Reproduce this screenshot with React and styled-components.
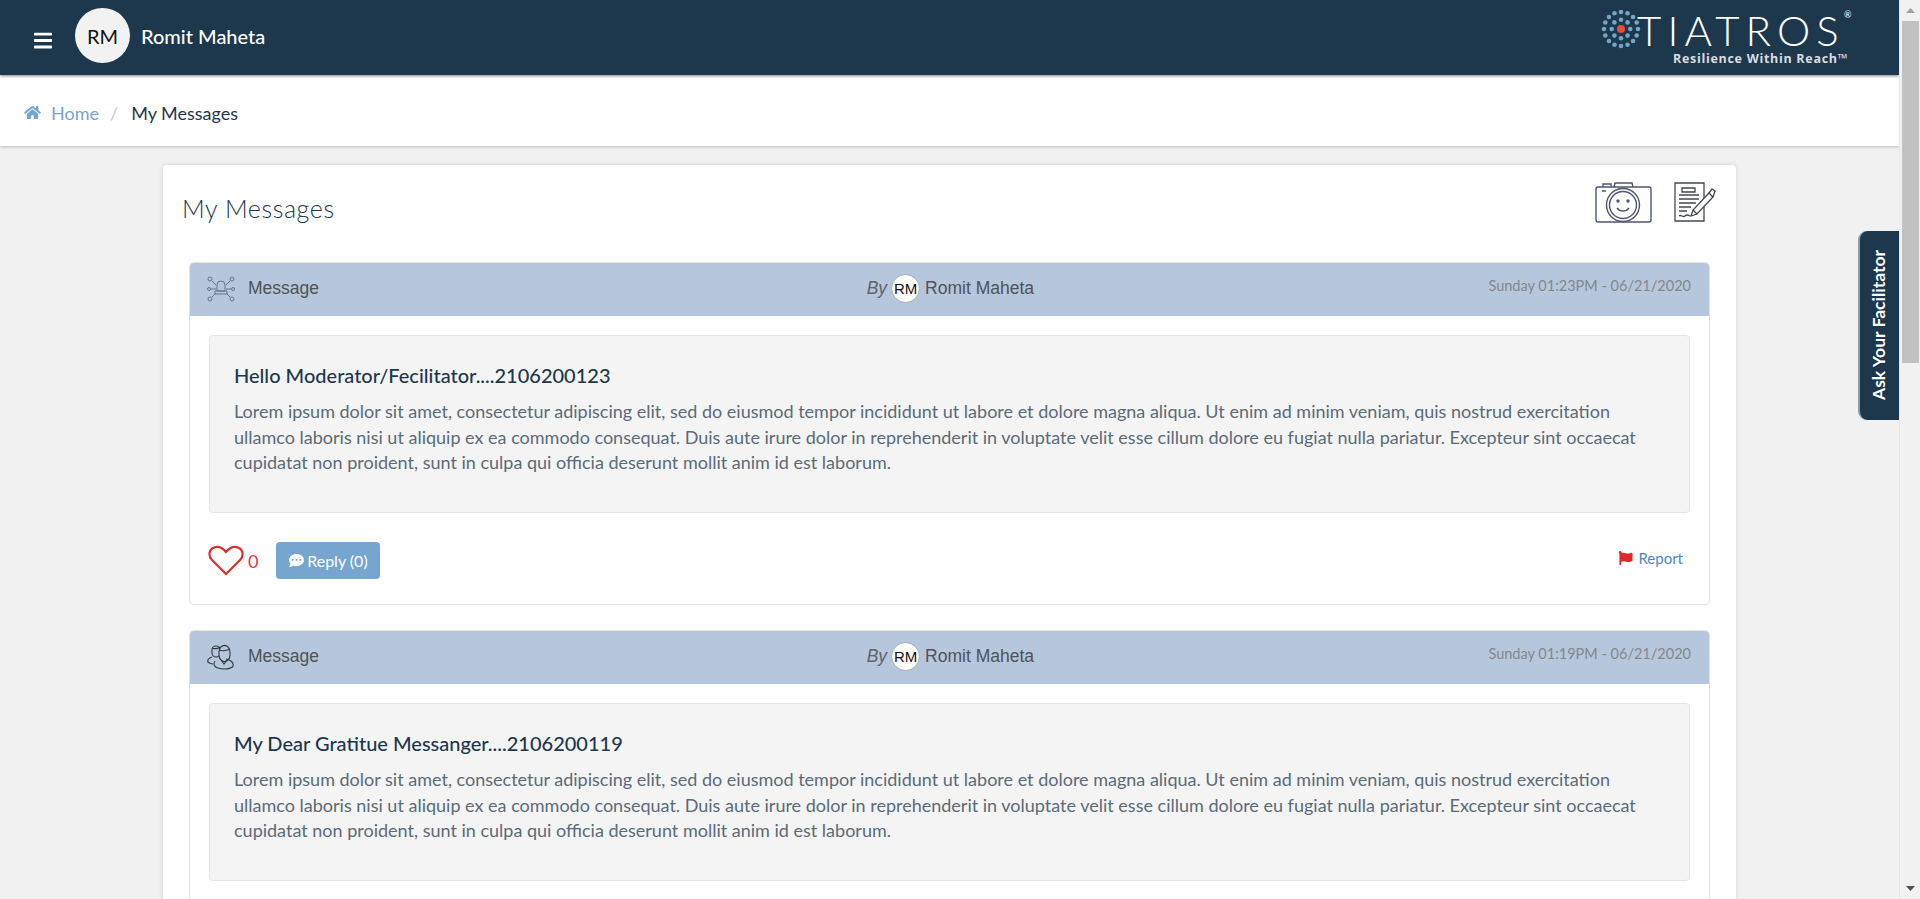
import React from "react";
import styled, { createGlobalStyle } from "styled-components";
import { FaBars, FaHome, FaCommentDots, FaFlag } from "react-icons/fa";

const GlobalStyle = createGlobalStyle`
  html, body {
    margin: 0;
    padding: 0;
    height: 899px;
    overflow: hidden;
    background: #f1f1f1;
    font-family: "Lato", "Open Sans", sans-serif;
  }
  * { box-sizing: border-box; }
`;

const lorem =
  "Lorem ipsum dolor sit amet, consectetur adipiscing elit, sed do eiusmod tempor incididunt ut labore et dolore magna aliqua. Ut enim ad minim veniam, quis nostrud exercitation ullamco laboris nisi ut aliquip ex ea commodo consequat. Duis aute irure dolor in reprehenderit in voluptate velit esse cillum dolore eu fugiat nulla pariatur. Excepteur sint occaecat cupidatat non proident, sunt in culpa qui officia deserunt mollit anim id est laborum.";

const messages = [
  { id: 1, icon: "network", date: "Sunday 01:23PM - 06/21/2020", title: "Hello Moderator/Fecilitator....2106200123" },
  { id: 2, icon: "people", date: "Sunday 01:19PM - 06/21/2020", title: "My Dear Gratitue Messanger....2106200119" },
];

const Page = styled.div`
  display: flex;
  width: 1920px;
  height: 899px;
  position: relative;
`;

const Main = styled.div`
  width: 1899px;
  height: 899px;
  overflow: hidden;
  background: #f1f1f1;
  position: relative;
`;

const Header = styled.header`
  height: 75px;
  background: #1d374c;
  box-shadow: 0 1px 3px rgba(0, 0, 0, 0.5);
  display: flex;
  align-items: center;
  padding: 0 49px 4px 34px;
  position: relative;
  z-index: 2;
`;

const Burger = styled(FaBars)`
  color: #fff;
  width: 18px;
  height: 21px;
  margin-right: 23px;
  margin-top: 9px;
`;

const Avatar = styled.div`
  width: 55px;
  height: 55px;
  border-radius: 50%;
  background: #f2f2f2;
  color: #111;
  display: flex;
  align-items: center;
  justify-content: center;
  font-size: 20px;
  margin-right: 11px;
`;

const UserName = styled.div`
  color: #fff;
  font-size: 20px;
  font-weight: 500;
`;

const Logo = styled.div`
  margin-left: auto;
  position: relative;
  width: 250px;
  height: 75px;
  margin-bottom: -4px;
`;

const LogoMark = styled.svg`
  position: absolute;
  left: 1px;
  top: 9px;
`;

const LogoWord = styled.div`
  position: absolute;
  left: 37px;
  top: 10px;
  color: #fff;
  font-size: 42px;
  line-height: 40px;
  font-weight: 300;
  letter-spacing: 6.1px;
  white-space: nowrap;
`;

const LogoReg = styled.span`
  position: absolute;
  left: 244px;
  top: 10px;
  color: #fff;
  font-size: 9px;
  line-height: 10px;
`;

const LogoTag = styled.div`
  position: absolute;
  left: 73px;
  top: 51px;
  color: #d9dde0;
  font-family: "Open Sans", sans-serif;
  font-size: 12.5px;
  line-height: 16px;
  font-weight: 700;
  letter-spacing: 0.7px;
  white-space: nowrap;
`;

const Crumbs = styled.nav`
  height: 71px;
  background: #fff;
  box-shadow: 0 1px 3px rgba(0, 0, 0, 0.22);
  display: flex;
  align-items: center;
  padding: 4px 24px 0;
  font-size: 18px;
  position: relative;
  z-index: 1;
`;

const HomeIcon = styled(FaHome)`
  color: #74a5d1;
  width: 17px;
  height: 15px;
  margin-right: 10px;
`;

const HomeLink = styled.a`
  color: #74a5d1;
`;

const CrumbSep = styled.span`
  color: #c8c8c8;
  margin: 0 13px 0 11px;
`;

const CrumbCurrent = styled.span`
  color: #1d374c;
`;

const Content = styled.div`
  padding: 19px 163px 0;
`;

const Panel = styled.section`
  background: #fff;
  border-radius: 4px;
  box-shadow: 0 0 5px rgba(0, 0, 0, 0.12);
  padding: 0 26px 20px;
`;

const PanelHead = styled.div`
  height: 97px;
  margin: 0 -6px 0 -7px;
  display: flex;
  align-items: flex-start;
  justify-content: space-between;
`;

const PanelTitle = styled.h2`
  margin: 26px 0 0;
  color: #1d374c;
  font-size: 25px;
  line-height: 34px;
  font-weight: 300;
  letter-spacing: 0.6px;
`;

const PanelTools = styled.div`
  display: flex;
  gap: 22px;
  padding-top: 17px;
`;

const MessageCard = styled.article`
  border: 1px solid #e2e2e2;
  border-radius: 5px;
  margin-bottom: 25px;
  overflow: hidden;
  background: #fff;
`;

const MessageHead = styled.div`
  height: 53px;
  background: #b6c6dc;
  display: grid;
  grid-template-columns: 1fr 1fr 1fr;
  align-items: center;
  padding: 0 18px 2px 17px;
  font-family: "Liberation Sans", Arial, sans-serif;
  color: #4f5358;
  font-size: 17.5px;
`;

const HeadLeft = styled.div`
  display: flex;
  align-items: center;
  gap: 13px;
`;

const HeadCenter = styled.div`
  display: flex;
  align-items: center;
  margin-left: 165px;
  white-space: nowrap;
`;

const ByLabel = styled.em`
  color: #5f6468;
  margin-right: 4px;
`;

const SmallAvatar = styled.span`
  width: 29px;
  height: 29px;
  border-radius: 50%;
  background: #fff;
  border: 1px solid #a9a9a9;
  color: #111;
  font-size: 15px;
  display: flex;
  align-items: center;
  justify-content: center;
  margin-right: 5px;
`;

const DateText = styled.div`
  text-align: right;
  font-family: "Lato", sans-serif;
  font-size: 14.5px;
  color: #83888d;
  margin-bottom: 6px;
`;

const MessageBody = styled.div`
  padding: 19px 19px 0 19px;
`;

const Well = styled.div`
  height: 178px;
  background: #f4f4f4;
  border: 1px solid #e3e3e3;
  border-radius: 4px;
  padding: 24px 24px;
`;

const WellTitle = styled.h4`
  margin: 0 0 9px;
  color: #1d374c;
  font-size: 20px;
  line-height: 30px;
  font-weight: 500;
`;

const WellText = styled.p`
  margin: 0;
  color: #5b6b78;
  font-size: 18px;
  line-height: 25.5px;
`;

const MessageFoot = styled.div`
  height: 91px;
  padding: 4px 26px 0 18px;
  display: flex;
  align-items: center;
`;

const LikeCount = styled.span`
  color: #e0393e;
  font-size: 18px;
  margin: 0 18px 0 4px;
`;

const ReplyButton = styled.button`
  width: 104px;
  height: 37px;
  background: #76a5cf;
  border: none;
  border-radius: 4px;
  color: #fff;
  font-family: inherit;
  font-size: 16px;
  display: flex;
  align-items: center;
  justify-content: center;
  gap: 3px;
`;

const ReportLink = styled.a`
  margin-left: auto;
  margin-bottom: 5px;
  color: #4a88c0;
  font-size: 15px;
  display: flex;
  align-items: center;
  gap: 5px;
`;

const ReportFlag = styled(FaFlag)`
  color: #e0282e;
  width: 15px;
  height: 14px;
`;

const FacilitatorTab = styled.button`
  position: absolute;
  right: 0;
  top: 231px;
  width: 41px;
  height: 189px;
  background: #1d374c;
  border: none;
  border-left: 2px solid #8f9aa3;
  border-radius: 9px 0 0 9px;
  padding: 0 2px 0 0;
  color: #fff;
  font-family: "Lato", sans-serif;
  font-size: 17.5px;
  font-weight: 700;
  z-index: 3;
  display: flex;
  align-items: center;
  justify-content: center;
`;

const TabLabel = styled.span`
  writing-mode: vertical-rl;
  transform: rotate(180deg);
  white-space: nowrap;
`;

const ScrollBar = styled.div`
  width: 21px;
  height: 899px;
  background: #f1f1f1;
  border-left: 1px solid #e6e6e6;
  display: flex;
  flex-direction: column;
  align-items: center;
  padding: 0 1px 0 1px;
`;

const ScrollArrow = styled.div`
  height: 21px;
  display: flex;
  align-items: center;
  justify-content: center;
  flex: none;
`;

const ScrollThumb = styled.div`
  width: 17px;
  height: 342px;
  background: #c1c1c1;
  flex: none;
`;

const ScrollSpace = styled.div`
  flex: 1;
`;

function LogoDots() {
  const rings = [
    { r: 9.3, n: 8, o: 0 },
    { r: 17, n: 16, o: 0 },
  ];
  return (
    <LogoMark width="40" height="40" viewBox="-20 -20 40 40">
      <circle r="4" fill="#f04a3a" />
      {rings.map((ring) =>
        Array.from({ length: ring.n }).map((_, i) => {
          const a = ((360 / ring.n) * i + ring.o) * (Math.PI / 180);
          return (
            <circle key={ring.r + "-" + i} cx={Math.cos(a) * ring.r} cy={Math.sin(a) * ring.r} r="2.3" fill="#74a5c6" />
          );
        })
      )}
    </LogoMark>
  );
}

function CameraIcon() {
  return (
    <svg width="57" height="41" viewBox="0 0 57 41" fill="none" stroke="#4f5670" strokeWidth="1.4">
      <path d="M3 5h51a2 2 0 0 1 2 2v31a2 2 0 0 1-2 2H3a2 2 0 0 1-2-2V7a2 2 0 0 1 2-2z" />
      <path d="M8 5V2h8v3M19 5l1-4h17l1 4M7 9h4" />
      <circle cx="28" cy="23" r="16.5" fill="#fff" />
      <circle cx="28" cy="23" r="13.5" />
      <circle cx="23" cy="19" r="1" fill="#4f5670" />
      <circle cx="33" cy="19" r="1" fill="#4f5670" />
      <path d="M22 26c3 4 9 4 12 0" />
    </svg>
  );
}

function NoteIcon() {
  return (
    <svg width="42" height="40" viewBox="0 0 42 40" fill="none" stroke="#44484f" strokeWidth="1.3">
      <path d="M1 1h29v38H1z" />
      <path d="M8 6h13v4H8zM5 13h20M5 17h20M5 21h17M5 25h12M5 29h8M5 34c2-2 4 2 6 0s3-1 5 0" />
      <path d="M17 34l2-6 16-17 4 4-16 17z" fill="#fff" />
      <path d="M35 11l3-4 3 2-2 6M19 28l4 4" />
    </svg>
  );
}

function NetworkIcon() {
  return (
    <svg width="28" height="26" viewBox="0 0 28 26" fill="none" stroke="#667689" strokeWidth="1">
      <path d="M10 9a4 4 0 0 1 8 0v6h-8zM8 18h12v-3H8z" />
      <circle cx="3" cy="3" r="2" />
      <circle cx="25" cy="3" r="2" />
      <circle cx="2" cy="13" r="1.5" />
      <circle cx="26" cy="13" r="1.5" />
      <circle cx="3" cy="23" r="2" />
      <circle cx="25" cy="23" r="2" />
      <path d="M5 5l4 4M23 5l-4 4M4 13h5M24 13h-5M5 21l4-4M23 21l-4-4" />
    </svg>
  );
}

function PeopleIcon() {
  return (
    <svg width="28" height="26" viewBox="0 0 28 26" fill="none" stroke="#33383f" strokeWidth="1.1">
      <path d="M5 6a4 4 0 0 1 8 0v3a4 4 0 0 1-8 0z" />
      <path d="M12 8a5 6 0 0 1 11 0v3a5 6 0 0 1-11 0z" fill="#b6c6dc" />
      <path d="M5 4c2 1 6 1 8-1M12 6c3 1 7 1 11-1" />
      <path d="M5 13c-3 1-5 3-4 5 1 1 3 2 5 2" />
      <path d="M8 17c-2 3-1 6 3 7 5 2 14 1 15-2 1-3-2-6-7-7" />
      <path d="M14 16l3 4 3-4" />
    </svg>
  );
}

function HeartIcon() {
  return (
    <svg width="36" height="31" viewBox="0 0 36 31" fill="none" stroke="#d9302f" strokeWidth="2.2">
      <path d="M18 29L4 15C0 11 1 5 5 3c4-2 9-1 13 4 4-5 9-6 13-4 4 2 5 8 1 12z" />
    </svg>
  );
}

function MessageItem({ message }) {
  return (
    <MessageCard>
      <MessageHead>
        <HeadLeft>
          {message.icon === "network" ? <NetworkIcon /> : <PeopleIcon />}
          Message
        </HeadLeft>
        <HeadCenter>
          <ByLabel>By</ByLabel>
          <SmallAvatar>RM</SmallAvatar>
          Romit Maheta
        </HeadCenter>
        <DateText>{message.date}</DateText>
      </MessageHead>
      <MessageBody>
        <Well>
          <WellTitle>{message.title}</WellTitle>
          <WellText>{lorem}</WellText>
        </Well>
      </MessageBody>
      <MessageFoot>
        <HeartIcon />
        <LikeCount>0</LikeCount>
        <ReplyButton>
          <FaCommentDots size={15} />
          Reply (0)
        </ReplyButton>
        <ReportLink>
          <ReportFlag />
          Report
        </ReportLink>
      </MessageFoot>
    </MessageCard>
  );
}

export default function App() {
  return (
    <Page>
      <GlobalStyle />
      <Main>
        <Header>
          <Burger />
          <Avatar>RM</Avatar>
          <UserName>Romit Maheta</UserName>
          <Logo>
            <LogoDots />
            <LogoWord>TIATROS</LogoWord>
            <LogoReg>®</LogoReg>
            <LogoTag>Resilience Within Reach™</LogoTag>
          </Logo>
        </Header>
        <Crumbs>
          <HomeIcon />
          <HomeLink>Home</HomeLink>
          <CrumbSep>/</CrumbSep>
          <CrumbCurrent>My Messages</CrumbCurrent>
        </Crumbs>
        <Content>
          <Panel>
            <PanelHead>
              <PanelTitle>My Messages</PanelTitle>
              <PanelTools>
                <CameraIcon />
                <NoteIcon />
              </PanelTools>
            </PanelHead>
            {messages.map((m) => (
              <MessageItem key={m.id} message={m} />
            ))}
          </Panel>
        </Content>
        <FacilitatorTab>
          <TabLabel>Ask Your Facilitator</TabLabel>
        </FacilitatorTab>
      </Main>
      <ScrollBar>
        <ScrollArrow>
          <svg width="9" height="5" viewBox="0 0 9 5"><path d="M4.5 0L9 5H0z" fill="#a3a3a3" /></svg>
        </ScrollArrow>
        <ScrollThumb />
        <ScrollSpace />
        <ScrollArrow>
          <svg width="9" height="5" viewBox="0 0 9 5"><path d="M0 0h9L4.5 5z" fill="#505050" /></svg>
        </ScrollArrow>
      </ScrollBar>
    </Page>
  );
}
